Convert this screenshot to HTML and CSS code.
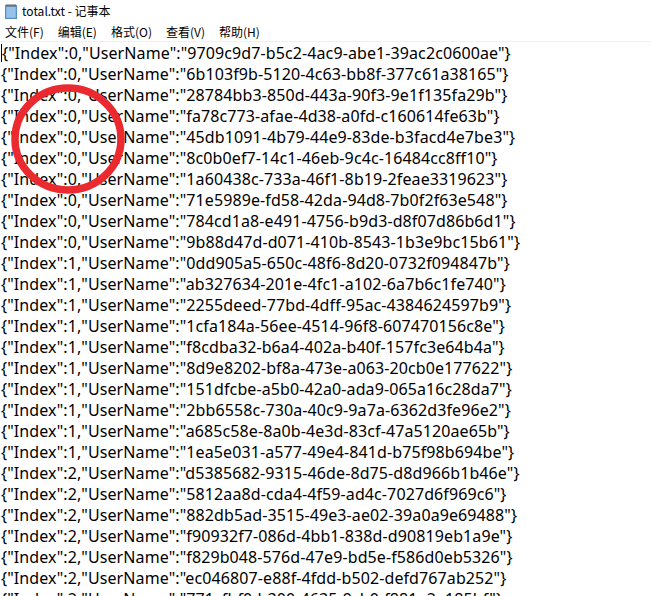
FILE: index.html
```html
<!DOCTYPE html>
<html>
<head>
<meta charset="utf-8">
<link rel="stylesheet" href="styles.css">
</head>
<body>
<div class="window">
  <div class="titlebar">
    <svg class="app-icon" width="16" height="16" viewBox="0 0 16 16">
      <rect x="2.5" y="2.5" width="11" height="13" fill="#7fb6e8" stroke="#5b8fc4"/>
      <rect x="4" y="4" width="8" height="10" fill="#a8d0f2"/>
      <path d="M4 5h8M4 7h8M4 9h8M4 11h8M4 13h8" stroke="#6fa4d8" stroke-width="0.6"/>
      <path d="M4 1v3M6 1v3M8 1v3M10 1v3M12 1v3" stroke="#555" stroke-width="0.9"/>
    </svg>
    <span class="title">total.txt - 记事本</span>
  </div>
  <div class="menubar">
    <span class="menu-item">文件(F)</span>
    <span class="menu-item">编辑(E)</span>
    <span class="menu-item">格式(O)</span>
    <span class="menu-item">查看(V)</span>
    <span class="menu-item">帮助(H)</span>
  </div>
  <div class="editor">
    <div class="line"><span class="caret"></span>{"Index":0,"UserName":"9709c9d7-b5c2-4ac9-abe1-39ac2c0600ae"}</div>
    <div class="line">{"Index":0,"UserName":"6b103f9b-5120-4c63-bb8f-377c61a38165"}</div>
    <div class="line">{"Index":0,"UserName":"28784bb3-850d-443a-90f3-9e1f135fa29b"}</div>
    <div class="line">{"Index":0,"UserName":"fa78c773-afae-4d38-a0fd-c160614fe63b"}</div>
    <div class="line">{"Index":0,"UserName":"45db1091-4b79-44e9-83de-b3facd4e7be3"}</div>
    <div class="line">{"Index":0,"UserName":"8c0b0ef7-14c1-46eb-9c4c-16484cc8ff10"}</div>
    <div class="line">{"Index":0,"UserName":"1a60438c-733a-46f1-8b19-2feae3319623"}</div>
    <div class="line">{"Index":0,"UserName":"71e5989e-fd58-42da-94d8-7b0f2f63e548"}</div>
    <div class="line">{"Index":0,"UserName":"784cd1a8-e491-4756-b9d3-d8f07d86b6d1"}</div>
    <div class="line">{"Index":0,"UserName":"9b88d47d-d071-410b-8543-1b3e9bc15b61"}</div>
    <div class="line">{"Index":1,"UserName":"0dd905a5-650c-48f6-8d20-0732f094847b"}</div>
    <div class="line">{"Index":1,"UserName":"ab327634-201e-4fc1-a102-6a7b6c1fe740"}</div>
    <div class="line">{"Index":1,"UserName":"2255deed-77bd-4dff-95ac-4384624597b9"}</div>
    <div class="line">{"Index":1,"UserName":"1cfa184a-56ee-4514-96f8-607470156c8e"}</div>
    <div class="line">{"Index":1,"UserName":"f8cdba32-b6a4-402a-b40f-157fc3e64b4a"}</div>
    <div class="line">{"Index":1,"UserName":"8d9e8202-bf8a-473e-a063-20cb0e177622"}</div>
    <div class="line">{"Index":1,"UserName":"151dfcbe-a5b0-42a0-ada9-065a16c28da7"}</div>
    <div class="line">{"Index":1,"UserName":"2bb6558c-730a-40c9-9a7a-6362d3fe96e2"}</div>
    <div class="line">{"Index":1,"UserName":"a685c58e-8a0b-4e3d-83cf-47a5120ae65b"}</div>
    <div class="line">{"Index":1,"UserName":"1ea5e031-a577-49e4-841d-b75f98b694be"}</div>
    <div class="line">{"Index":2,"UserName":"d5385682-9315-46de-8d75-d8d966b1b46e"}</div>
    <div class="line">{"Index":2,"UserName":"5812aa8d-cda4-4f59-ad4c-7027d6f969c6"}</div>
    <div class="line">{"Index":2,"UserName":"882db5ad-3515-49e3-ae02-39a0a9e69488"}</div>
    <div class="line">{"Index":2,"UserName":"f90932f7-086d-4bb1-838d-d90819eb1a9e"}</div>
    <div class="line">{"Index":2,"UserName":"f829b048-576d-47e9-bd5e-f586d0eb5326"}</div>
    <div class="line">{"Index":2,"UserName":"ec046807-e88f-4fdd-b502-defd767ab252"}</div>
    <div class="line">{"Index":2,"UserName":"771cfbf0-b300-4635-9cb0-f881e2a185bf"}</div>
    <svg class="annotation" width="130" height="120" viewBox="0 0 130 120">
      <ellipse cx="65" cy="60" rx="53" ry="51" fill="none" stroke="#ea2a2e" stroke-width="7.5"/>
    </svg>
  </div>
</div>
</body>
</html>
```
FILE: styles.css
```css
html, body {
  margin: 0;
  padding: 0;
  background: #ffffff;
  overflow: hidden;
}
.window {
  width: 651px;
  height: 596px;
  overflow: hidden;
  font-family: "Noto Sans CJK SC", "Noto Sans", sans-serif;
  color: #000;
}
.titlebar {
  height: 21px;
  display: flex;
  align-items: center;
  padding-left: 3px;
  gap: 3px;
  font-size: 12px;
}
.title {
  line-height: 21px;
}
.menubar {
  height: 20px;
  display: flex;
  align-items: center;
  font-size: 12px;
  border-bottom: 1px solid #f0f0f0;
}
.menu-item {
  padding: 0 5px;
  margin-right: 4px;
  line-height: 21px;
}
.editor {
  position: relative;
  padding-top: 1px;
  padding-left: 1px;
  font-family: "Noto Sans", "Open Sans", sans-serif;
  font-size: 16px;
  letter-spacing: 0.1px;
}
.line {
  height: 21px;
  line-height: 21px;
  white-space: pre;
}
.caret {
  display: inline-block;
  width: 1px;
  height: 18px;
  background: #000;
  vertical-align: -3px;
}
.annotation {
  position: absolute;
  left: 3px;
  top: 37px;
}
```
